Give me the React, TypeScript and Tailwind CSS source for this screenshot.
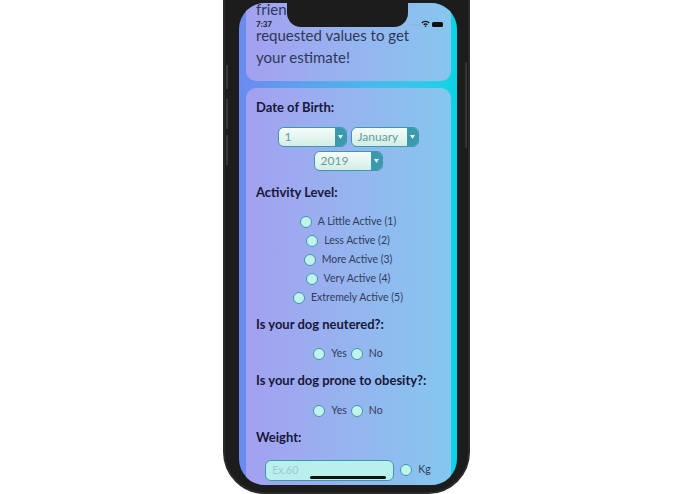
import React from 'react'

const font = { fontFamily: 'Lato, "Open Sans", sans-serif' }

function Select({ value, className }: { value: string; className: string }) {
  return (
    <div className={`flex h-[20px] rounded-[6px] border-[1.5px] border-[#3f98a8] overflow-hidden ${className}`}>
      <div className="flex-1 bg-gradient-to-b from-[#f6fcf9] to-[#d2eee5] text-[12px] text-[#5f9ea0] pl-[6px] leading-[17px]">{value}</div>
      <div className="w-[11px] bg-[#3b99ae] flex items-center justify-center">
        <svg width="5" height="4" viewBox="0 0 5 4"><path d="M0 0h5L2.5 4z" fill="#e8f7f7" /></svg>
      </div>
    </div>
  )
}

function Radio({ label }: { label: string }) {
  return (
    <div className="flex items-center gap-[6px] h-[19px]">
      <span className="w-[12px] h-[12px] rounded-full border-[1.5px] border-[#3b9aa6] bg-[#c2f2ee]" />
      <span className="text-[10.5px] text-[#2f3d5c]">{label}</span>
    </div>
  )
}

function YesNo() {
  return (
    <div className="flex justify-center items-center h-[19px] gap-[4px]">
      <Radio label="Yes" />
      <Radio label="No" />
    </div>
  )
}

function Heading({ children, className = '' }: { children: React.ReactNode; className?: string }) {
  return <p className={`text-[13px] font-bold text-[#17183a] h-[18px] leading-[18px] ${className}`}>{children}</p>
}

export default function App() {
  const levels = ['A Little Active (1)', 'Less Active (2)', 'More Active (3)', 'Very Active (4)', 'Extremely Active (5)']

  return (
    <div className="w-[695px] h-[494px] bg-white overflow-hidden pl-[223px]" style={font}>
      <div className="relative w-[247px] h-[534px] mt-[-40px] rounded-[42px] bg-[#1c1c1c] border-[2px] border-[#2a2a2a] pl-[14px] pr-[11px] pt-[41px]">
        {/* side buttons */}
        <div className="absolute left-[1px] top-[103px] w-[2px] h-[24px] bg-[#383838]" />
        <div className="absolute left-[1px] top-[137px] w-[2px] h-[30px] bg-[#383838]" />
        <div className="absolute left-[1px] top-[173px] w-[2px] h-[30px] bg-[#383838]" />
        <div className="absolute right-[1px] top-[100px] w-[2px] h-[86px] bg-[#333]" />

        <div className="relative w-[218px] h-[482px] rounded-[26px] overflow-hidden bg-gradient-to-r from-[#6a8af0] to-[#02d4e4] pl-[7px] pr-[6px] flex flex-col gap-[7px]">
          <div className="mt-[-12px] pt-[10px] pb-[12px] pl-[10px] rounded-[10px] bg-gradient-to-r from-[#a3a0f0] to-[#86c6ee] text-[15px] leading-[22.5px] text-[#2e3858]">
            <p className="leading-[15px] mt-[1px] mb-[6.5px]">friendly, fill in the</p>
            <p>requested values to get</p>
            <p>your estimate!</p>
          </div>

          <div className="flex-1 rounded-[10px] bg-gradient-to-r from-[#a3a0f0] to-[#84c7ee] pl-[10px] pr-[11px] pt-[10px]">
            <Heading>Date of Birth:</Heading>
            <div className="mt-[11px] flex flex-col items-center gap-[4px]">
              <div className="flex gap-[4px]">
                <Select value="1" className="w-[69px]" />
                <Select value="January" className="w-[68px]" />
              </div>
              <Select value="2019" className="w-[69px]" />
            </div>

            <Heading className="mt-[12px]">Activity Level:</Heading>
            <div className="mt-[12px] flex flex-col items-center">
              {levels.map(l => <Radio key={l} label={l} />)}
            </div>

            <Heading className="mt-[7px]">Is your dog neutered?:</Heading>
            <div className="mt-[12px]"><YesNo /></div>

            <Heading className="mt-[7px]">Is your dog prone to obesity?:</Heading>
            <div className="mt-[13px]"><YesNo /></div>

            <Heading className="mt-[7px]">Weight:</Heading>
            <div className="mt-[14px] flex justify-center items-center gap-[6px]">
              <div className="w-[129px] h-[21px] rounded-[6px] border-[1.5px] border-[#3b9aa6] bg-[#b9f0ee] text-[10.5px] text-[#9cc9cb] pl-[6px] leading-[18px]">Ex.60</div>
              <Radio label="Kg" />
            </div>
          </div>

          {/* notch + status bar */}
          <div className="absolute left-[48px] top-0 w-[121px] h-[24px] rounded-b-[14px] bg-[#1c1c1c]" />
          <span className="absolute left-[17px] top-[17px] text-[8px] leading-[9px] font-bold text-[#1a1c2c]">7:37</span>
          <div className="absolute left-[171px] top-[21px] flex gap-[1px]">
            {[0, 1, 2, 3].map(i => <span key={i} className="w-[1.5px] h-[1.5px] rounded-full bg-[#8fb0d8]" />)}
          </div>
          <svg className="absolute left-[182px] top-[17px]" width="9" height="7" viewBox="0 0 9 7">
            <path d="M0.3 2.4A6 6 0 0 1 8.7 2.4L7.7 3.4A4.6 4.6 0 0 0 1.3 3.4Z" fill="#111" />
            <path d="M2.2 4.3A3.3 3.3 0 0 1 6.8 4.3L5.8 5.3A1.9 1.9 0 0 0 3.2 5.3Z" fill="#111" />
            <circle cx="4.5" cy="6.2" r="0.8" fill="#111" />
          </svg>
          <div className="absolute left-[193px] top-[19px] w-[11px] h-[5px] rounded-[1.5px] bg-[#111]" />
          <div className="absolute left-[71px] top-[473px] w-[76px] h-[3px] rounded-full bg-[#111]" />
        </div>
      </div>
    </div>
  )
}
